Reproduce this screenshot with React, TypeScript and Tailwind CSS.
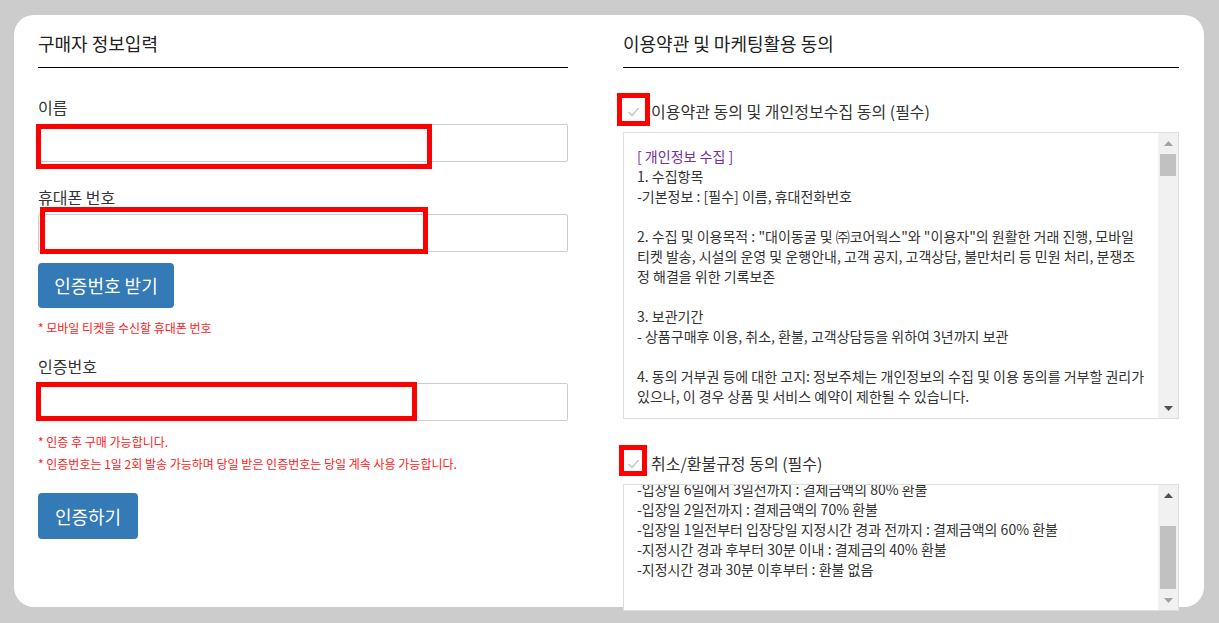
const FONT = "[font-family:'Noto_Sans_CJK_KR','Noto_Sans',sans-serif]";

const privacyLines: { text: string; purple?: boolean }[] = [
  { text: '[ 개인정보 수집 ]', purple: true },
  { text: '1. 수집항목' },
  { text: '-기본정보 : [필수] 이름, 휴대전화번호' },
  { text: '' },
  { text: '2. 수집 및 이용목적 : "대이동굴 및 ㈜코어웍스"와 "이용자"의 원활한 거래 진행, 모바일' },
  { text: '티켓 발송, 시설의 운영 및 운행안내, 고객 공지, 고객상담, 불만처리 등 민원 처리, 분쟁조' },
  { text: '정 해결을 위한 기록보존' },
  { text: '' },
  { text: '3. 보관기간' },
  { text: '- 상품구매후 이용, 취소, 환불, 고객상담등을 위하여 3년까지 보관' },
  { text: '' },
  { text: '4. 동의 거부권 등에 대한 고지: 정보주체는 개인정보의 수집 및 이용 동의를 거부할 권리가' },
  { text: '있으나, 이 경우 상품 및 서비스 예약이 제한될 수 있습니다.' },
  { text: '' },
];

const refundLines = [
  '-입장일 6일에서 3일전까지 : 결제금액의 80% 환불',
  '-입장일 2일전까지 : 결제금액의 70% 환불',
  '-입장일 1일전부터 입장당일 지정시간 경과 전까지 : 결제금액의 60% 환불',
  '-지정시간 경과 후부터 30분 이내 : 결제금의 40% 환불',
  '-지정시간 경과 30분 이후부터 : 환불 없음',
];

function Arrow({ up, dark }: { up?: boolean; dark?: boolean }) {
  return (
    <div className="h-[20px] flex items-center justify-center">
      <svg width="9" height="5" viewBox="0 0 9 5">
        <polygon
          points={up ? '4.5,0 9,5 0,5' : '0,0 9,0 4.5,5'}
          fill={dark ? '#505050' : '#a3a3a3'}
        />
      </svg>
    </div>
  );
}

function Scrollbar({ thumbTop, thumbHeight, upDark, downDark }: { thumbTop: string; thumbHeight: string; upDark?: boolean; downDark?: boolean }) {
  return (
    <div className="w-[20px] bg-[#f1f1f1] flex flex-col shrink-0">
      <Arrow up dark={upDark} />
      <div className="flex-1">
        <div className={`mx-[2px] bg-[#c1c1c1] ${thumbTop} ${thumbHeight}`} />
      </div>
      <Arrow dark={downDark} />
    </div>
  );
}

function RedBox({ className }: { className: string }) {
  return <div className={`absolute border-[5px] border-[#ff0000] pointer-events-none ${className}`} />;
}

function Check() {
  return (
    <svg width="13" height="13" viewBox="0 0 13 13" className="ml-[4px] mr-[11px] shrink-0">
      <polyline points="1.5,7 5,10.5 11.5,3" fill="none" stroke="#c8c8c8" strokeWidth="1.6" />
    </svg>
  );
}

function Heading({ children }: { children: string }) {
  return (
    <div className="h-[38px] shrink-0 border-b border-black text-[18px] leading-[26px] text-[#222]">{children}</div>
  );
}

export default function App() {
  return (
    <div className={`w-[1219px] h-[623px] bg-[#cccccc] pt-[15px] pl-[14px] overflow-hidden ${FONT}`}>
      <div className="w-[1190px] h-[592px] bg-white rounded-[20px] px-[24px] pt-[15px] flex items-start gap-[55px]">
        {/* 구매자 정보 */}
        <div className="w-[530px] flex flex-col">
          <Heading>구매자 정보입력</Heading>

          <label className="mt-[27px] text-[16px] leading-[24px] text-[#333]">이름</label>
          <div className="relative mt-[5px]">
            <input className="w-full h-[38px] border border-[#cccccc] rounded-[2px] px-3 outline-none" />
            <RedBox className="-left-[2px] top-0 w-[396px] h-[45px]" />
          </div>

          <label className="mt-[23px] text-[16px] leading-[24px] text-[#333]">휴대폰 번호</label>
          <div className="relative mt-[5px]">
            <input className="w-full h-[38px] border border-[#cccccc] rounded-[2px] px-3 outline-none" />
            <RedBox className="left-[2px] -top-[7px] w-[388px] h-[47px]" />
          </div>

          <button className="mt-[11px] w-[136px] h-[45px] bg-[#337ab7] text-white text-[18px] rounded-[4px]">
            인증번호 받기
          </button>
          <p className="mt-[11px] text-[12px] leading-[18px] text-[#ff2020]">* 모바일 티켓을 수신할 휴대폰 번호</p>

          <label className="mt-[17px] text-[16px] leading-[24px] text-[#333]">인증번호</label>
          <div className="relative mt-[5px]">
            <input className="w-full h-[38px] border border-[#cccccc] rounded-[2px] px-3 outline-none" />
            <RedBox className="-left-[2px] -top-[1px] w-[381px] h-[39px]" />
          </div>

          <p className="mt-[12px] text-[12px] leading-[18px] text-[#ff2020]">* 인증 후 구매 가능합니다.</p>
          <p className="mt-[4px] text-[12px] leading-[18px] text-[#ff2020]">
            * 인증번호는 1일 2회 발송 가능하며 당일 받은 인증번호는 당일 계속 사용 가능합니다.
          </p>

          <button className="mt-[20px] w-[100px] h-[46px] bg-[#337ab7] text-white text-[18px] rounded-[4px]">
            인증하기
          </button>
        </div>

        {/* 약관 동의 */}
        <div className="w-[556px] flex flex-col">
          <Heading>이용약관 및 마케팅활용 동의</Heading>

          <div className="relative mt-[27px] h-[32px] shrink-0 flex items-center">
            <Check />
            <span className="text-[16px] text-[#333]">이용약관 동의 및 개인정보수집 동의 (필수)</span>
            <RedBox className="-left-[6px] -top-[2px] w-[33px] h-[33px]" />
          </div>

          <div className="mt-[5px] h-[287px] shrink-0 border border-[#dddddd] bg-white flex">
            <div className="flex-1 overflow-hidden pl-[13px] pt-[13px] text-[14px] leading-[20px] text-[#333]">
              {privacyLines.map((l, i) => (
                <div key={i} className={`h-[20px] whitespace-nowrap ${l.purple ? 'text-[#7030a0]' : ''}`}>
                  {l.text}
                </div>
              ))}
            </div>
            <Scrollbar thumbTop="mt-px" thumbHeight="h-[22px]" downDark />
          </div>

          <div className="relative mt-[28px] h-[32px] shrink-0 flex items-center">
            <Check />
            <span className="text-[16px] text-[#333]">취소/환불규정 동의 (필수)</span>
            <RedBox className="-left-[4px] -top-[2px] w-[28px] h-[31px]" />
          </div>

          <div className="mt-[5px] h-[127px] shrink-0 border border-[#dddddd] bg-white flex">
            <div className="flex-1 overflow-hidden pl-[13px] text-[14px] leading-[20px] text-[#333]">
              <div className="-mt-[6px]">
                {refundLines.map((t, i) => (
                  <div key={i} className="h-[20px] whitespace-nowrap">
                    {t}
                  </div>
                ))}
              </div>
            </div>
            <Scrollbar thumbTop="mt-[21px]" thumbHeight="h-[63px]" upDark />
          </div>
        </div>
      </div>
    </div>
  );
}
